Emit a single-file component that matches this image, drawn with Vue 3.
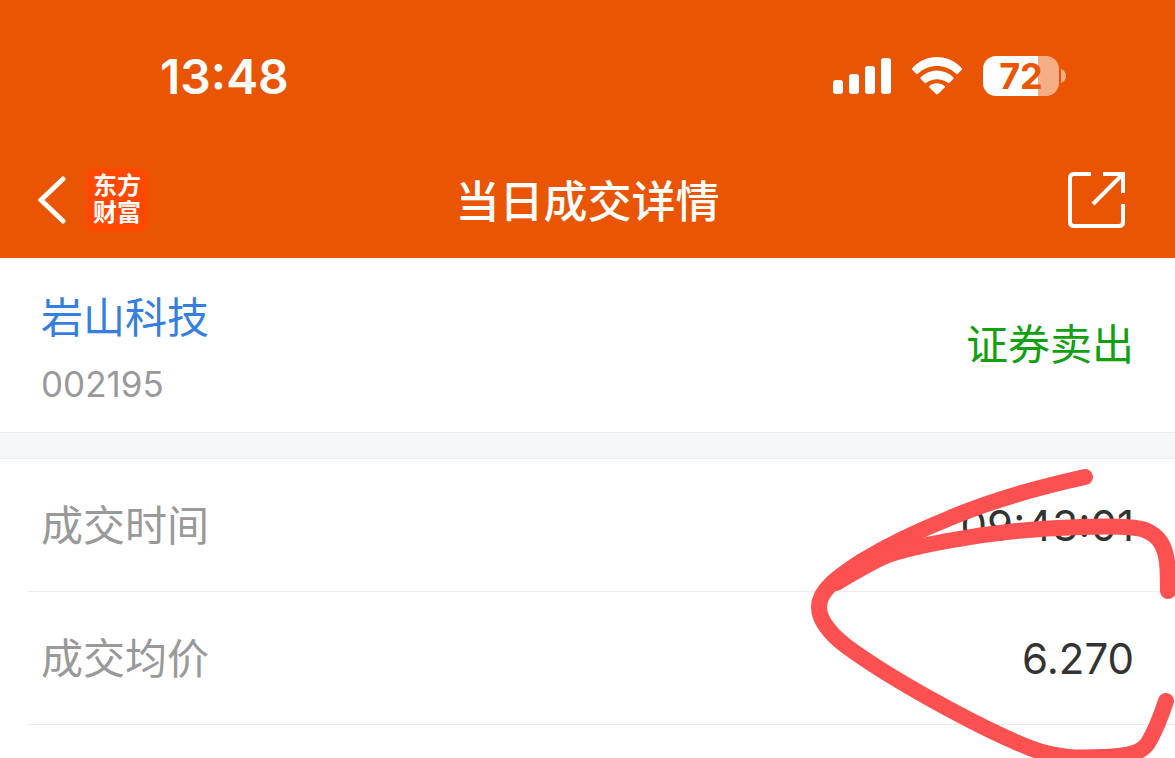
<script setup>
const stock = { name: '岩山科技', code: '002195', side: '证券卖出' }
const rows = [
  { label: '成交时间', value: '09:43:01' },
  { label: '成交均价', value: '6.270' },
]
</script>

<template>
  <div class="page">
    <header class="header">
      <div class="status">
        <time class="clock">13:48</time>
        <div class="indicators">
          <svg class="signal" viewBox="0 0 58 38" aria-hidden="true">
            <rect x="0" y="23" width="10" height="14" rx="3" />
            <rect x="16" y="17" width="10" height="20" rx="3" />
            <rect x="32" y="9" width="10" height="28" rx="3" />
            <rect x="48" y="1" width="10" height="36" rx="3" />
          </svg>
          <svg class="wifi" viewBox="0 0 52 38" aria-hidden="true">
            <path d="M1.200 11.200C15-3.700 37-3.700 50.800 11.200Q51.500 12 50.800 12.800L46.800 16.800Q46 17.500 45.200 16.800C34 6.500 18 6.500 6.800 16.800Q6 17.500 5.200 16.800L1.200 12.800Q.5 12 1.200 11.200Z" />
            <path d="M9.700 20.300C19 11.200 33 11.200 42.300 20.300Q43 21.100 42.300 21.900L38.400 25.800Q37.600 26.500 36.800 25.800C30.600 20.900 21.400 20.900 15.200 25.800Q14.400 26.500 13.600 25.800L9.700 21.900Q9 21.100 9.700 20.300Z" />
            <path d="M18.400 29C22.500 25.200 29.500 25.200 33.600 29Q34.400 29.800 33.600 30.600L27 37Q26 37.900 25 37L18.400 30.600Q17.600 29.800 18.400 29Z" />
          </svg>
          <div class="battery">
            <span class="cell">72</span>
            <svg class="tip" viewBox="0 0 5 14" aria-hidden="true"><path d="M0 0Q5 2 5 7T0 14Z" /></svg>
          </div>
        </div>
      </div>
      <nav class="nav">
        <div class="nav-left">
          <button class="icon-button" type="button" aria-label="返回">
            <svg class="back" viewBox="0 0 28 48"><path d="M25 3L3 24L25 45" /></svg>
          </button>
          <a class="brand" href="#"><span>东方</span><span>财富</span></a>
        </div>
        <h1 class="title">当日成交详情</h1>
        <div class="nav-right">
          <button class="icon-button" type="button" aria-label="分享">
            <svg class="share" viewBox="0 0 58 58">
              <path d="M23 3H6Q2 3 2 7V51Q2 55 6 55H51Q55 55 55 51V33M35 3H55V22M54 4L25 33" />
            </svg>
          </button>
        </div>
      </nav>
    </header>

    <section class="stock">
      <div class="identity">
        <a class="name" href="#">{{ stock.name }}</a>
        <p class="code">{{ stock.code }}</p>
      </div>
      <strong class="side">{{ stock.side }}</strong>
    </section>

    <main class="details">
      <dl class="list">
        <div v-for="row in rows" :key="row.label" class="row">
          <dt>{{ row.label }}</dt>
          <dd>{{ row.value }}</dd>
        </div>
      </dl>
      <svg class="marker" viewBox="800 459 375 299" aria-hidden="true">
        <path d="M1085 477C1035 488 990 501 950 518C915 532 885 547 862 561C838 577 819 590 819 607C819 619 829 633 846 646C892 680 980 728 1030 748C1059 759 1080 758 1105 757C1125 756 1141 754 1148 743C1156 730 1161 716 1166 701" />
        <path d="M836 583C853 573 868 564 883 557C900 550 920 546 947 541C1000 531 1040 528 1080 527C1110 526 1134 526 1145 530C1160 536 1165 547 1167 562C1168 573 1168 582 1168 591" />
      </svg>
    </main>
  </div>
</template>

<style>
body {
  margin: 0;
  background: #fff;
}
</style>

<style scoped>
.page {
  display: flex;
  flex-direction: column;
  min-height: 100vh;
  background: #fff;
  color: #333;
  font-family: Inter, "Noto Sans CJK SC", sans-serif;
}
.header {
  background: #ea5504;
  color: #fff;
}
.status {
  display: flex;
  align-items: center;
  justify-content: space-between;
  box-sizing: border-box;
  height: 142px;
  padding: 10px 109px 0 160px;
}
.clock {
  padding-top: 2px;
  font-size: 48px;
  line-height: 56px;
  font-weight: 600;
}
.indicators {
  display: flex;
  align-items: center;
  gap: 20px;
}
.signal {
  width: 58px;
  height: 38px;
  fill: #fff;
}
.wifi {
  width: 52px;
  height: 38px;
  fill: #fff;
}
.battery {
  display: flex;
  align-items: center;
  gap: 2px;
}
.cell {
  width: 76px;
  height: 40px;
  border-radius: 13px;
  background: linear-gradient(to right, #fff 72%, #f5ad85 72%);
  color: #ea5504;
  font-size: 36px;
  line-height: 40px;
  font-weight: 700;
  text-align: center;
}
.tip {
  width: 5px;
  height: 14px;
  fill: #f5ad85;
}
.nav {
  display: grid;
  grid-template-columns: 1fr auto 1fr;
  align-items: center;
  height: 116px;
  padding: 0 38px;
}
.nav-left {
  display: flex;
  align-items: center;
  gap: 20px;
}
.nav-right {
  display: flex;
  justify-content: flex-end;
  padding-right: 11px;
}
.icon-button {
  display: flex;
  padding: 0;
  border: 0;
  background: none;
  color: inherit;
}
.icon-button svg {
  fill: none;
  stroke: #fff;
}
.back {
  width: 28px;
  height: 48px;
  stroke-width: 5;
  stroke-linecap: round;
}
.share {
  width: 58px;
  height: 58px;
  stroke-width: 4;
}
.brand {
  display: flex;
  flex-direction: column;
  align-items: center;
  box-sizing: border-box;
  width: 62px;
  height: 64px;
  padding-top: 4px;
  border-radius: 10px;
  background: #ff4800;
  color: #fff;
  font-size: 24px;
  line-height: 27px;
  font-weight: 700;
  text-decoration: none;
}
.title {
  margin: 0;
  padding-top: 4px;
  font-size: 44px;
  line-height: 60px;
  font-weight: 500;
}
.stock {
  display: flex;
  align-items: center;
  justify-content: space-between;
  box-sizing: border-box;
  height: 174px;
  padding: 0 41px;
}
.identity {
  padding-top: 10px;
}
.name {
  display: block;
  color: #367fe0;
  font-size: 42px;
  line-height: 60px;
  text-decoration: none;
}
.code {
  margin: 8px 0 0;
  color: #999;
  font-size: 35px;
  line-height: 56px;
}
.side {
  color: #10a010;
  font-size: 42px;
  line-height: 60px;
  font-weight: 400;
}
.details {
  position: relative;
  flex: 1;
  overflow: hidden;
}
.details::before {
  content: "";
  display: block;
  height: 25px;
  border-top: 1px solid #ebecee;
  border-bottom: 1px solid #ebecee;
  background: #f6f7f9;
}
.list {
  margin: 0 0 0 27px;
}
.row {
  display: flex;
  align-items: center;
  justify-content: space-between;
  height: 130px;
  padding: 2px 41px 0 14px;
  border-bottom: 1px solid #ededed;
  font-size: 42px;
  line-height: 60px;
}
.row dt {
  color: #999;
}
.row dd {
  margin: 0;
}
.marker {
  position: absolute;
  top: 27px;
  right: 0;
  width: 375px;
  height: 299px;
  fill: none;
  stroke: #fd5050;
  stroke-width: 16;
  stroke-linecap: round;
  stroke-linejoin: round;
}
</style>
